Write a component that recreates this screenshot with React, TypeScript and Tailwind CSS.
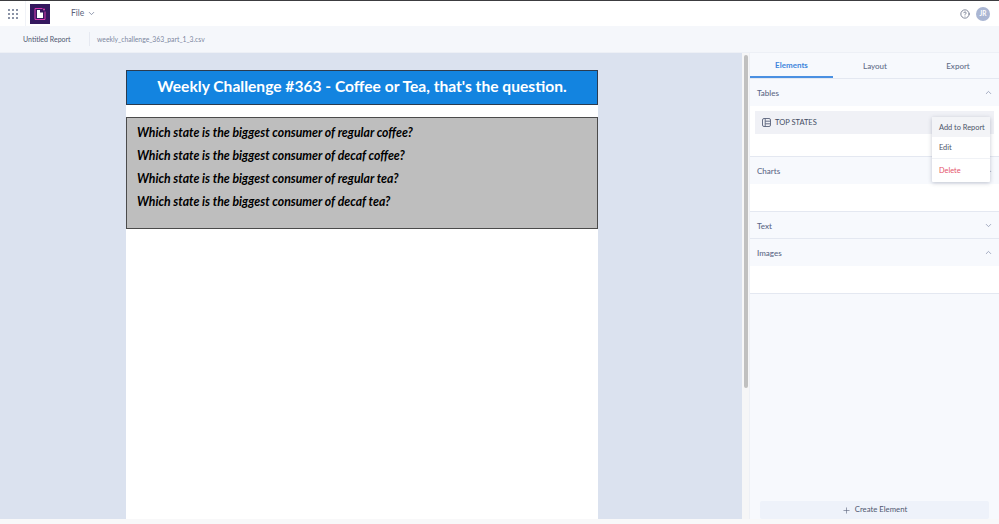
import { ChevronDown, ChevronUp, Plus, CircleHelp } from "lucide-react";

const questions = [
  "Which state is the biggest consumer of regular coffee?",
  "Which state is the biggest consumer of decaf coffee?",
  "Which state is the biggest consumer of regular tea?",
  "Which state is the biggest consumer of decaf tea?",
];

const GridIcon = () => (
  <svg width="10" height="10" viewBox="0 0 10 10" fill="#5a6580">
    {[1, 5, 9].map((y) =>
      [1, 5, 9].map((x) => <circle key={`${x}-${y}`} cx={x} cy={y} r="0.95" />)
    )}
  </svg>
);

const Logo = () => (
  <div className="flex h-5 w-5 items-center justify-center bg-[#34185f]">
    <svg width="14" height="14" viewBox="0 0 14 14" fill="none">
      <path d="M2 1.5h7.5M12 4.5v8H2v-11" stroke="#d63ab0" strokeWidth="1" />
      <path d="M4 3h3v2.5h3V11H4z" fill="#ffffff" />
      <circle cx="11" cy="2.5" r="1" fill="#e23fb5" />
    </svg>
  </div>
);

const TableIcon = () => (
  <svg width="9" height="9" viewBox="0 0 9 9" fill="none" stroke="#59627a" strokeWidth="0.9">
    <rect x="0.5" y="0.5" width="8" height="8" rx="1.5" />
    <path d="M3.2 0.5v8M3.2 3.2h5.3M3.2 5.8h5.3" />
  </svg>
);

const SectionHeader = ({ label, open }: { label: string; open: boolean }) => (
  <div className="flex h-[27px] items-center justify-between pl-[7px] pr-[6px] text-[8px] font-medium text-[#5b6785]">
    <span>{label}</span>
    {open ? (
      <ChevronUp className="h-[9px] w-[9px] text-[#7d88a6]" strokeWidth={1.8} />
    ) : (
      <ChevronDown className="h-[9px] w-[9px] text-[#7d88a6]" strokeWidth={1.8} />
    )}
  </div>
);

export default function App() {
  return (
    <div className="flex h-[524px] w-[999px] flex-col overflow-hidden bg-[#f8f8f9] font-['Lato','Liberation_Sans',sans-serif]">
      {/* top nav */}
      <header className="flex h-[26px] shrink-0 items-center border-t border-[#3c3c40] bg-white">
        <div className="flex h-full w-[26px] items-center justify-center border-r border-[#f0f2f7] pl-px">
          <GridIcon />
        </div>
        <div className="ml-[4px]">
          <Logo />
        </div>
        <div className="ml-[21px] flex items-center gap-[3px] text-[8.5px] text-[#59627a]">
          File
          <ChevronDown className="h-[9px] w-[9px] text-[#6f7a96]" strokeWidth={2} />
        </div>
        <div className="ml-auto flex items-center gap-[6px] pr-[9px]">
          <CircleHelp className="h-[10px] w-[10px] text-[#59627a]" strokeWidth={1.8} />
          <div className="flex h-[14px] w-[14px] items-center justify-center rounded-full bg-[#aab6d3] text-[6.5px] font-bold text-white">
            JR
          </div>
        </div>
      </header>

      {/* report bar */}
      <div className="flex h-[27px] shrink-0 items-center border-b border-[#edf0f6] bg-[#f5f7fb] text-[7px]">
        <span className="ml-[23px] w-[66px] text-[#4f5870]">Untitled Report</span>
        <span className="h-[14px] w-px bg-[#e6e9f1]" />
        <span className="ml-[7px] text-[6.8px] text-[#7d87a1]">weekly_challenge_363_part_1_3.csv</span>
      </div>

      <div className="flex h-[466px] shrink-0">
        {/* canvas */}
        <main className="w-[742px] overflow-hidden bg-[#dbe2ef] pl-[126px] pt-[17px]">
          <div className="h-full w-[472px] bg-white">
            <div className="flex h-[35px] items-center justify-center border border-[#2b3b4f] bg-[#1384e0] pb-[2px] text-[15.6px] font-bold text-white">
              Weekly Challenge #363 - Coffee or Tea, that's the question.
            </div>
            <div className="mt-[12px] flex h-[112px] flex-col gap-[6px] border border-[#4b4b4b] bg-[#bebebe] pl-[10px] pt-[6px] text-[12.25px] font-bold italic leading-[17px] text-black">
              {questions.map((q) => (
                <p key={q}>{q}</p>
              ))}
            </div>
          </div>
        </main>

        {/* scrollbar */}
        <div className="flex w-[7px] justify-center bg-[#f6f6f7] pt-[2px]">
          <div className="h-[333px] w-[4px] rounded-full bg-[#c0c0c0]" />
        </div>

        {/* side panel */}
        <aside className="relative flex w-[250px] flex-col border-l border-[#eef0f5] bg-[#f7f9fd]">
          <div className="flex h-[26px] border-b border-[#e4e8f1] text-[8px] font-medium text-[#626d88]">
            <div className="flex w-[83px] items-center justify-center border-b-2 border-[#4a90e2] font-bold text-[#3f86dc]">
              Elements
            </div>
            <div className="flex w-[84px] items-center justify-center">Layout</div>
            <div className="flex w-[82px] items-center justify-center">Export</div>
          </div>

          <SectionHeader label="Tables" open />
          <div className="h-[51px] border-b border-[#e4e8f1] bg-white px-[5px] pt-[5px]">
            <div className="flex h-[23px] items-center gap-[4px] bg-[#f0f1f6] pl-[7px] text-[7.5px] text-[#454d63]">
              <TableIcon />
              TOP STATES
            </div>
          </div>

          <SectionHeader label="Charts" open />
          <div className="h-[28px] border-b border-[#e4e8f1] bg-white" />

          <div className="h-[27px] border-b border-[#e4e8f1]">
            <SectionHeader label="Text" open={false} />
          </div>

          <SectionHeader label="Images" open />
          <div className="h-[28px] border-b border-[#e4e8f1] bg-white" />

          <div className="mx-[10px] mt-auto flex h-[18px] items-center justify-center gap-[4px] rounded-[2px] bg-[#eef2fa] text-[7.75px] text-[#4f5870]">
            <Plus className="h-[9px] w-[9px] text-[#59627a]" strokeWidth={1.6} />
            Create Element
          </div>

          {/* row menu */}
          <div className="absolute left-[182px] top-[64px] w-[58px] rounded-[1px] bg-white text-[7.4px] shadow-[0_1px_4px_rgba(60,70,100,0.3)]">
            <div className="flex h-[20px] items-center bg-[#f3f4f7] pl-[7px] pt-[2px] text-[#4c5469]">Add to Report</div>
            <div className="flex h-[19px] items-center pl-[7px] pt-[2px] text-[#4c5469]">Edit</div>
            <div className="mt-[2px] flex h-[24px] items-center border-t border-[#f0f2f6] pl-[7px] pt-px text-[#e5536a]">Delete</div>
          </div>
        </aside>
      </div>
    </div>
  );
}
